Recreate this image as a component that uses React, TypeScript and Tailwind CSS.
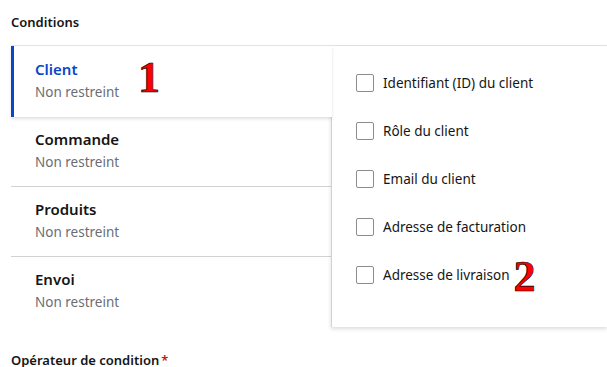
import React from 'react';

const tabs = [
  { name: 'Client', sub: 'Non restreint' },
  { name: 'Commande', sub: 'Non restreint' },
  { name: 'Produits', sub: 'Non restreint' },
  { name: 'Envoi', sub: 'Non restreint' },
];

const options = [
  'Identifiant (ID) du client',
  'Rôle du client',
  'Email du client',
  'Adresse de facturation',
  'Adresse de livraison',
];

const mark = "font-['Liberation_Serif',serif] font-bold text-[#ff0000] [-webkit-text-stroke:0.7px_#000] leading-none";

export default function App() {
  return (
    <div className="w-[607px] h-[367px] overflow-hidden bg-white pl-[11px] font-['Noto_Sans',sans-serif] text-[#151515]">
      <div className="pt-[13px] h-[45px] text-[13px] font-semibold">Conditions</div>

      <div className="flex border-t border-[#e4e4e4]">
        <div className="w-[320px] flex flex-col">
          {tabs.map((t, i) => {
            const active = i === 0;
            return (
              <div
                key={t.name}
                className={
                  active
                    ? 'relative z-10 -mr-px h-[71px] bg-white border-l-[3px] border-[#0b46c9] pl-[21px] pt-[13px] shadow-[0_2px_3px_rgba(0,0,0,0.12)]'
                    : 'h-[70px] border-b border-[#d2d2d2] last:border-b-0 pl-[24px] pt-[12px]'
                }
              >
                <div className={`text-[15px] font-semibold leading-[20px] ${active ? 'text-[#0b46c9]' : 'text-[#151515]'}`}>
                  {t.name}
                </div>
                <div className="text-[13.5px] leading-[20px] mt-[3px] text-[#6a6e73]">{t.sub}</div>
                {active && <span className={`absolute left-[124px] top-[10px] text-[44px] ${mark}`}>1</span>}
              </div>
            );
          })}
        </div>

        <div className="flex-1 h-[281px] border-l border-[#d2d2d2] bg-white shadow-[0_2px_4px_rgba(0,0,0,0.14)] pl-[24px] pt-[28px] flex flex-col gap-[30px]">
          {options.map((o, i) => (
            <label key={o} className="flex items-center h-[18px] text-[13.5px] text-[#151515]">
              <span className="w-[18px] h-[18px] border border-[#8a8d90] rounded-[2px] bg-white shrink-0" />
              <span className="ml-[9px]">{o}</span>
              {i === 4 && <span className={`ml-[4px] mt-[4px] text-[44px] ${mark}`}>2</span>}
            </label>
          ))}
        </div>
      </div>

      <div className="mt-[24px] text-[13px] font-semibold">
        Opérateur de condition<span className="text-[#c9190b] ml-[2px]">*</span>
      </div>
    </div>
  );
}
